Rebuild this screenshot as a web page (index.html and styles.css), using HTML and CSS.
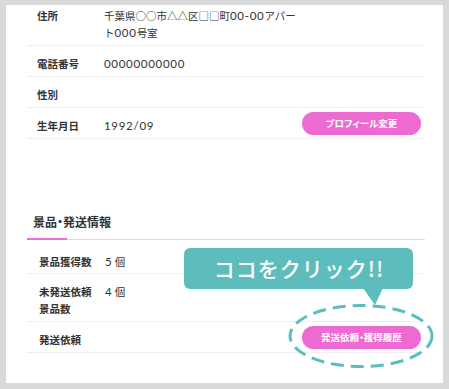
FILE: index.html
```html
<!DOCTYPE html>
<html lang="ja">
<head>
<meta charset="utf-8">
<title>会員情報</title>
<link rel="stylesheet" href="styles.css">
</head>
<body>
<div class="frame">
  <div class="card">
    <div class="list">
      <div class="row first">
        <div class="label">住所</div>
        <div class="value">千葉県○○市△△区□□町<span class="num">00-00</span>アパー<br>ト<span class="num">000</span>号室</div>
      </div>
      <div class="row">
        <div class="label">電話番号</div>
        <div class="value"><span class="num">00000000000</span></div>
      </div>
      <div class="row">
        <div class="label">性別</div>
        <div class="value"></div>
      </div>
      <div class="row">
        <div class="label">生年月日</div>
        <div class="value"><span class="num">1992/09</span></div>
        <a class="btn">プロフィール変更</a>
      </div>
    </div>

    <h2 class="section-title">景品・発送情報</h2>
    <div class="list section-list">
      <div class="row">
        <div class="label">景品獲得数</div>
        <div class="value"><span class="num">5</span> 個</div>
      </div>
      <div class="row">
        <div class="label">未発送依頼<br>景品数</div>
        <div class="value"><span class="num">4</span> 個</div>
      </div>
      <div class="row">
        <div class="label">発送依頼</div>
        <div class="value"></div>
        <a class="btn">発送依頼・獲得履歴</a>
      </div>
    </div>

    <div class="callout">ココをクリック!!</div>
    <svg class="ring" width="146" height="66" viewBox="0 0 146 66">
      <ellipse cx="73" cy="33" rx="71" ry="30.5" fill="none" stroke="#5dbdbd" stroke-width="3" stroke-dasharray="13 7"/>
    </svg>
  </div>
</div>
</body>
</html>
```
FILE: styles.css
```css
body {
  margin: 0;
  background: #d9d9d9;
  font-family: "Noto Sans CJK JP", sans-serif;
  color: #333;
}

.frame {
  padding: 5px 6px 6px 6px;
}

.card {
  position: relative;
  height: 378px;
  box-sizing: border-box;
  padding: 0 18px 0 21px;
  background: #fff;
  overflow: hidden;
}

.row {
  display: flex;
  align-items: flex-start;
  border-bottom: 1px solid #efefef;
}

.label {
  flex: none;
  width: 67px;
  padding: 9px 0 4px 10px;
  font-size: 10.5px;
  line-height: 17px;
  font-weight: 700;
  color: #333;
}

.value {
  padding: 9px 0 4px;
  font-size: 10.5px;
  line-height: 17px;
  color: #333;
}

.num {
  font-family: "Lato", sans-serif;
  font-size: 11.5px;
  letter-spacing: 0.7px;
}

.row.first .label,
.row.first .value {
  padding-top: 3px;
  line-height: 16.5px;
  padding-bottom: 4px;
}

.btn {
  flex: none;
  align-self: center;
  margin-left: auto;
  margin-right: 4px;
  width: 119px;
  height: 23px;
  border-radius: 12px;
  background: #ee6ad3;
  color: #fff;
  font-size: 9.5px;
  font-weight: 700;
  font-feature-settings: "palt";
  display: flex;
  align-items: center;
  justify-content: center;
}

.section-title {
  position: relative;
  margin: 74px 0 0;
  padding: 0 0 9px 6px;
  font-size: 12px;
  line-height: 17px;
  font-weight: 700;
  font-feature-settings: "palt";
  color: #333;
  border-bottom: 1px solid #dedede;
}

.section-title::after {
  content: "";
  position: absolute;
  left: 0;
  bottom: -1px;
  width: 40px;
  height: 2px;
  background: #f36bd9;
}

.section-list .label {
  width: 66px;
  padding-left: 12px;
}

.section-list .row:first-child .label,
.section-list .row:first-child .value {
  padding-top: 13px;
  padding-bottom: 3px;
}

.callout {
  position: absolute;
  left: 178px;
  top: 243px;
  width: 229px;
  height: 41px;
  border-radius: 6px;
  background: #5dbdbd;
  color: #fff;
  font-size: 21px;
  font-weight: 500;
  letter-spacing: 1px;
  text-indent: 1px;
  line-height: 41px;
  text-align: center;
}

.callout::after {
  content: "";
  position: absolute;
  left: 179px;
  top: 40px;
  width: 20px;
  height: 17px;
  background: #5dbdbd;
  clip-path: polygon(0 0, 100% 0, 60% 100%);
}

.ring {
  position: absolute;
  left: 282px;
  top: 298px;
}
```
